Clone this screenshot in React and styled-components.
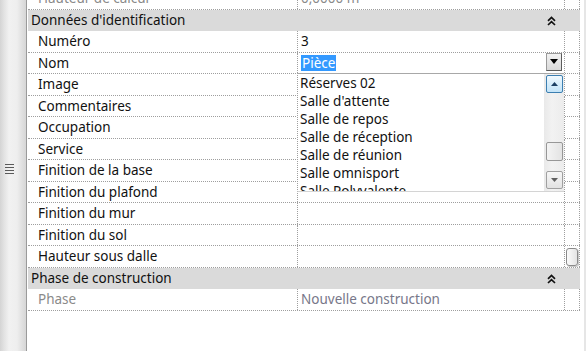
import React from 'react';
import styled, { createGlobalStyle } from 'styled-components';

const GlobalStyle = createGlobalStyle`
  html, body {
    margin: 0;
    padding: 0;
    background: #fff;
  }
  body {
    font-family: "Noto Sans", "DejaVu Sans", sans-serif;
    font-size: 13.5px;
    color: #111;
  }
`;

const rowsA = [
  { label: 'Numéro', value: '3' },
  { label: 'Nom', combo: true },
  { label: 'Image' },
  { label: 'Commentaires' },
  { label: 'Occupation' },
  { label: 'Service' },
  { label: 'Finition de la base' },
  { label: 'Finition du plafond' },
  { label: 'Finition du mur' },
  { label: 'Finition du sol' },
  { label: 'Hauteur sous dalle' },
];

const options = [
  'Réserves 02',
  "Salle d'attente",
  'Salle de repos',
  'Salle de réception',
  'Salle de réunion',
  'Salle omnisport',
  'Salle Polyvalente',
];

const Chevrons = () => (
  <svg width="9" height="10" viewBox="0 0 9 10">
    <polyline points="1,4.8 4.5,1.5 8,4.8" fill="none" stroke="#111" strokeWidth="1.7" />
    <polyline points="1,9 4.5,5.7 8,9" fill="none" stroke="#111" strokeWidth="1.7" />
  </svg>
);

const Arrow = ({ up, color, w = 7, h = 4 }) => (
  <svg width={w} height={h} viewBox={`0 0 ${w} ${h}`}>
    <polygon
      points={up ? `0,${h} ${w / 2},0 ${w},${h}` : `0,0 ${w},0 ${w / 2},${h}`}
      fill={color}
    />
  </svg>
);

const App = () => (
  <>
    <GlobalStyle />
    <Window>
      <Splitter>
        <Grip>
          <span />
          <span />
          <span />
          <span />
        </Grip>
      </Splitter>
      <Panel>
        <Grid>
          <Row>
            <Label muted>Hauteur de calcul</Label>
            <Value muted>0,0000 m</Value>
            <Spare />
          </Row>
          <Header>
            Données d'identification
            <Chevrons />
          </Header>
          {rowsA.map((r) => (
            <Row key={r.label}>
              <Label>{r.label}</Label>
              {r.combo ? (
                <Value>
                  <Combo>
                    <Selected>Pièce</Selected>
                    <DropButton>
                      <Arrow color="#000" w={8} h={5} />
                    </DropButton>
                  </Combo>
                </Value>
              ) : (
                <Value>{r.value}</Value>
              )}
              <Spare />
            </Row>
          ))}
          <Header>
            Phase de construction
            <Chevrons />
          </Header>
          <Row>
            <Label muted>Phase</Label>
            <Value phase>Nouvelle construction</Value>
            <Spare />
          </Row>

          <DropList>
            <Options>
              {options.map((o) => (
                <Option key={o}>{o}</Option>
              ))}
            </Options>
            <ListScroll>
              <ScrollUp>
                <Arrow up color="#1c3f63" w={7} h={4} />
              </ScrollUp>
              <ListThumb />
              <ScrollDown>
                <Arrow color="#606060" w={7} h={4} />
              </ScrollDown>
            </ListScroll>
          </DropList>
          <PanelThumb />
        </Grid>
      </Panel>
    </Window>
  </>
);

const Window = styled.div`
  display: flex;
  width: 586px;
  height: 351px;
  overflow: hidden;
  background: #fff;
`;

const Splitter = styled.div`
  flex: none;
  width: 27px;
  box-sizing: border-box;
  border-right: 1px solid #9a9a9a;
  background: linear-gradient(
    to right,
    #d4d4d4 0,
    #e2e2e2 4px,
    #f1f1f1 9px,
    #eeeeee 17px,
    #e0e0e0 22px,
    #d6d6d6 26px
  );
  padding: 164px 0 0 5px;
`;

const Grip = styled.div`
  display: flex;
  flex-direction: column;
  gap: 2px;
  width: 9px;

  span {
    display: block;
    height: 1px;
    background: #5a5a5a;
  }
`;

const Panel = styled.div`
  flex: 1;
  padding-left: 1px;
  overflow: hidden;
  border-right: 2px solid #e6e6e6;
`;

const Grid = styled.div`
  position: relative;
  width: 552px;
  margin-top: -12px;
`;

const Row = styled.div`
  display: grid;
  grid-template-columns: 269px 267px 16px;
  height: 21.5px;
  box-sizing: border-box;
  border-bottom: 1px dotted #9e9e9e;
`;

const Label = styled.div`
  display: flex;
  align-items: center;
  padding-left: 10px;
  color: ${(p) => (p.muted ? '#8a8a8a' : '#111')};
  white-space: nowrap;
  overflow: hidden;
`;

const Value = styled.div`
  position: relative;
  display: flex;
  align-items: center;
  padding-left: 3px;
  border-left: 1px dotted #9e9e9e;
  color: ${(p) => (p.muted ? '#8a8a8a' : p.phase ? '#777789' : '#111')};
  white-space: nowrap;
  overflow: hidden;
`;

const Spare = styled.div`
  border-left: 1px dotted #9e9e9e;
  border-right: 1px dotted #9e9e9e;
`;

const Header = styled.div`
  display: flex;
  align-items: center;
  justify-content: space-between;
  height: 21.5px;
  padding: 0 24px 0 3px;
  background: #dadada;
  color: #111;

  svg {
    margin-top: 1px;
  }
`;

const Combo = styled.div`
  flex: 1;
  display: flex;
  align-items: center;
  justify-content: space-between;
  height: 100%;
  padding-right: 2px;
`;

const Selected = styled.span`
  background: #3399ff;
  color: #fff;
  padding: 0 1px;
  line-height: 16px;
`;

const DropButton = styled.div`
  display: flex;
  align-items: center;
  justify-content: center;
  align-self: flex-start;
  width: 16px;
  height: 18px;
  box-sizing: border-box;
  border: 1px solid #9a9a9a;
  border-right-color: #5c5c5c;
  border-bottom-color: #5c5c5c;
  background: linear-gradient(#f2f2f2, #d9d9d9);
`;

const DropList = styled.div`
  position: absolute;
  left: 269px;
  top: 85px;
  width: 267px;
  height: 119px;
  box-sizing: border-box;
  display: flex;
  background: #fff;
  border-top: 1px solid #a8a8a8;
  border-bottom: 1px solid #d4d4d4;
  border-left: 1px dotted #9e9e9e;
`;

const Options = styled.div`
  flex: 1;
  overflow: hidden;
  padding-left: 2px;
`;

const Option = styled.div`
  height: 18px;
  line-height: 18px;
  color: #111;
  white-space: nowrap;
`;

const ListScroll = styled.div`
  flex: none;
  width: 20px;
  display: flex;
  flex-direction: column;
  align-items: center;
  padding: 1px 0;
  box-sizing: border-box;
  background: linear-gradient(to right, #e9e9e9, #f2f2f2 40%, #ececec);
`;

const ScrollButton = styled.div`
  display: flex;
  align-items: center;
  justify-content: center;
  width: 17px;
  height: 18px;
  box-sizing: border-box;
  border-radius: 2px;
`;

const ScrollUp = styled(ScrollButton)`
  border: 1px solid #3c7fb1;
  background: linear-gradient(#f2f9fe, #d6edfb 50%, #c4e4f8);
`;

const ScrollDown = styled(ScrollButton)`
  border: 1px solid #a0a0a0;
  background: linear-gradient(#f7f7f7, #e2e2e2);
`;

const ListThumb = styled.div`
  width: 17px;
  height: 19px;
  margin: 49px 0 10px;
  box-sizing: border-box;
  border: 1px solid #979797;
  border-radius: 2px;
  background: linear-gradient(to right, #f4f4f4, #e3e3e3);
`;

const PanelThumb = styled.div`
  position: absolute;
  left: 538px;
  top: 260px;
  width: 12px;
  height: 18px;
  box-sizing: border-box;
  border: 1px solid #8a8a8a;
  border-radius: 3px;
  background: linear-gradient(to right, #fbfbfb, #e4e4e4);
  box-shadow: 1px 1px 0 #c8c8c8;
`;

export default App;
